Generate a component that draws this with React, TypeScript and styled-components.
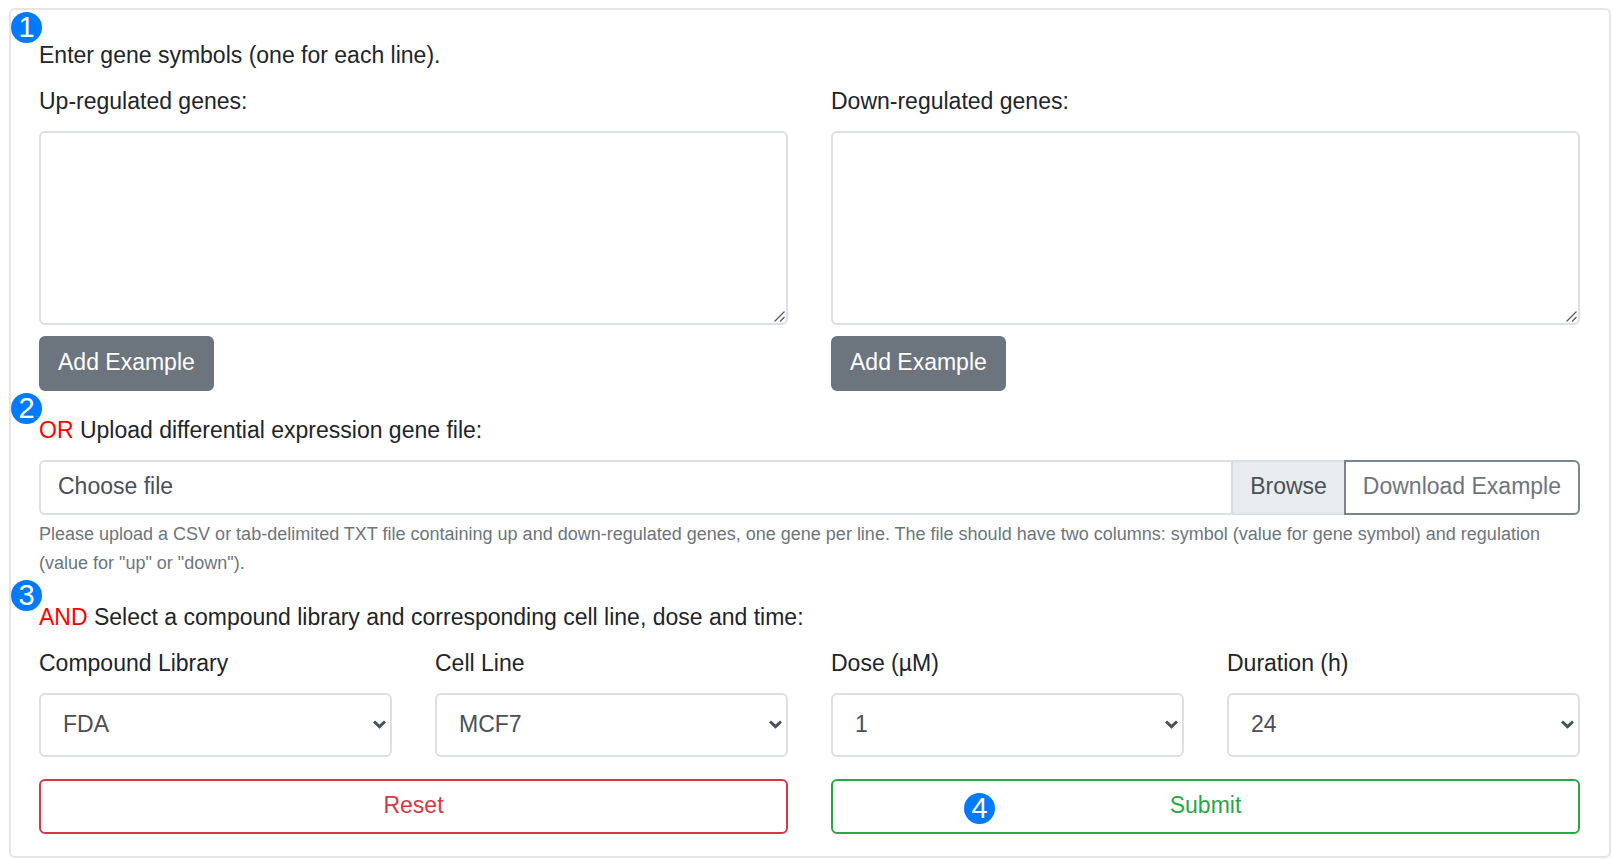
import React, { useState } from "react";
import styled, { createGlobalStyle } from "styled-components";

const GlobalStyle = createGlobalStyle`
  *, *::before, *::after { box-sizing: border-box; }
  body {
    margin: 0;
    background: #fff;
    color: #212529;
    font-family: "Liberation Sans", Arial, sans-serif;
    font-size: 23px;
    line-height: 34px;
  }
  button, input, select, textarea { font: inherit; margin: 0; }
`;

const Page = styled.main`
  padding: 8px 1px 1px 9px;
`;

const Card = styled.form`
  display: flex;
  flex-direction: column;
  gap: 22px;
  padding: 28px 29px 22px 28px;
  border: 2px solid #e5e5e5;
  border-radius: 6px;
`;

const Section = styled.section`
  position: relative;
  display: flex;
  flex-direction: column;
  gap: 12px;
`;

const Line = styled.p`
  margin: 0;
`;

const Accent = styled.span`
  color: #f00;
`;

const Badge = styled.span<{ $top: number; $left: number }>`
  position: absolute;
  top: ${(p) => p.$top}px;
  left: ${(p) => p.$left}px;
  width: 31px;
  height: 31px;
  border-radius: 50%;
  background: #007bff;
  color: #fff;
  font-size: 29px;
  line-height: 30px;
  text-align: center;
  pointer-events: none;
`;

const Grid = styled.div<{ $columns: number }>`
  display: grid;
  grid-template-columns: repeat(${(p) => p.$columns}, minmax(0, 1fr));
  gap: 43px;
`;

const Field = styled.div`
  display: flex;
  flex-direction: column;
`;

const FieldLabel = styled.label`
  margin-bottom: 13px;
`;

const Control = styled.div`
  position: relative;
  display: flex;
`;

const GeneBox = styled.textarea`
  width: 100%;
  height: 194px;
  padding: 8px 17px;
  border: 2px solid #dce0e5;
  border-radius: 6px;
  background: #fff;
  color: #495057;
  resize: vertical;
  &::-webkit-resizer { display: none; }
`;

const Grip = styled.svg`
  position: absolute;
  right: 3px;
  bottom: 3px;
  width: 11px;
  height: 11px;
  pointer-events: none;
`;

const Button = styled.button<{ $color: string; $solid?: boolean }>`
  padding: 7px 17px 10px;
  border: 2px solid ${(p) => p.$color};
  border-radius: 6px;
  background: ${(p) => (p.$solid ? p.$color : "#fff")};
  color: ${(p) => (p.$solid ? "#fff" : p.$color)};
  cursor: pointer;
`;

const ExampleButton = styled(Button)`
  align-self: flex-start;
  margin-top: 11px;
`;

const DownloadButton = styled(Button)`
  border-radius: 0 6px 6px 0;
  color: #6c757d;
`;

const WideButton = styled(Button)`
  width: 100%;
`;

const UploadRow = styled.div`
  display: flex;
  margin-bottom: 5px;
`;

const FilePicker = styled.label`
  position: relative;
  display: flex;
  flex: 1;
  border: 2px solid #dce0e5;
  border-right: 0;
  border-radius: 6px 0 0 6px;
  color: #495057;
  overflow: hidden;
`;

const FileInput = styled.input`
  position: absolute;
  inset: 0;
  width: 100%;
  opacity: 0;
  cursor: pointer;
`;

const FileName = styled.span`
  flex: 1;
  padding: 7px 17px 10px;
`;

const Browse = styled.span`
  padding: 7px 17px 10px;
  border-left: 2px solid #d6dbe0;
  background: #e9ecef;
`;

const UploadGroup = styled.div`
  display: flex;
  flex-direction: column;
  margin-top: 1px;
`;

const Help = styled.small`
  color: #6c757d;
  font-size: 18px;
  line-height: 29px;
`;

const Select = styled.select`
  appearance: none;
  width: 100%;
  height: 64px;
  padding: 0 40px 3px 22px;
  border: 2px solid #dce0e5;
  border-radius: 6px;
  background: #fff;
  color: #495057;
`;

const Chevron = styled.svg`
  position: absolute;
  right: 6px;
  top: 27px;
  width: 13px;
  height: 9px;
  pointer-events: none;
`;

const genes = {
  up: ["EGR1", "FOS", "JUN"],
  down: ["CCNB1", "CDK1", "TOP2A"],
};

const choices = [
  { id: "library", label: "Compound Library", options: ["FDA"] },
  { id: "cell", label: "Cell Line", options: ["MCF7"] },
  { id: "dose", label: "Dose (µM)", options: ["1"] },
  { id: "duration", label: "Duration (h)", options: ["24"] },
];

type GeneFieldProps = { id: string; label: string; example: string[] };

function GeneField({ id, label, example }: GeneFieldProps) {
  const [value, setValue] = useState("");
  return (
    <Field>
      <FieldLabel htmlFor={id}>{label}</FieldLabel>
      <Control>
        <GeneBox id={id} value={value} onChange={(e) => setValue(e.target.value)} />
        <Grip viewBox="0 0 11 11" fill="none" stroke="#5a5a5a" strokeWidth="1.2" aria-hidden="true">
          <path d="M.5 10.5l10-10M6 10.5l4.5-4.5" />
        </Grip>
      </Control>
      <ExampleButton type="button" $color="#6c757d" $solid onClick={() => setValue(example.join("\n"))}>
        Add Example
      </ExampleButton>
    </Field>
  );
}

export default function App() {
  const [fileName, setFileName] = useState("Choose file");
  return (
    <>
      <GlobalStyle />
      <Page>
        <Card onSubmit={(e) => e.preventDefault()}>
          <Section>
            <Badge $top={-26} $left={-28}>1</Badge>
            <Line>Enter gene symbols (one for each line).</Line>
            <Grid $columns={2}>
              <GeneField id="up" label="Up-regulated genes:" example={genes.up} />
              <GeneField id="down" label="Down-regulated genes:" example={genes.down} />
            </Grid>
          </Section>

          <Section>
            <Badge $top={-20} $left={-28}>2</Badge>
            <Line>
              <Accent>OR</Accent> Upload differential expression gene file:
            </Line>
            <UploadGroup>
              <UploadRow>
                <FilePicker htmlFor="file">
                  <FileInput
                    id="file"
                    type="file"
                    accept=".csv,.txt"
                    onChange={(e) => setFileName(e.target.files?.[0]?.name ?? "Choose file")}
                  />
                  <FileName>{fileName}</FileName>
                  <Browse>Browse</Browse>
                </FilePicker>
                <DownloadButton type="button" $color="#7b848b">
                  Download Example
                </DownloadButton>
              </UploadRow>
              <Help>
                Please upload a CSV or tab-delimited TXT file containing up and down-regulated genes, one gene per
                line. The file should have two columns: symbol (value for gene symbol) and regulation (value for
                "up" or "down").
              </Help>
            </UploadGroup>
          </Section>

          <Section>
            <Badge $top={-20} $left={-28}>3</Badge>
            <Line>
              <Accent>AND</Accent> Select a compound library and corresponding cell line, dose and time:
            </Line>
            <Grid $columns={4}>
              {choices.map((choice) => (
                <Field key={choice.id}>
                  <FieldLabel htmlFor={choice.id}>{choice.label}</FieldLabel>
                  <Control>
                    <Select id={choice.id}>
                      {choice.options.map((option) => (
                        <option key={option}>{option}</option>
                      ))}
                    </Select>
                    <Chevron viewBox="0 0 13 9" fill="none" stroke="#495057" strokeWidth="3" aria-hidden="true">
                      <path d="M1 1.5l5.5 5.2L12 1.5" />
                    </Chevron>
                  </Control>
                </Field>
              ))}
            </Grid>
          </Section>

          <Grid $columns={2}>
            <WideButton type="reset" $color="#dc3545">Reset</WideButton>
            <Control>
              <WideButton type="submit" $color="#28a745">Submit</WideButton>
              <Badge $top={14} $left={133}>4</Badge>
            </Control>
          </Grid>
        </Card>
      </Page>
    </>
  );
}
